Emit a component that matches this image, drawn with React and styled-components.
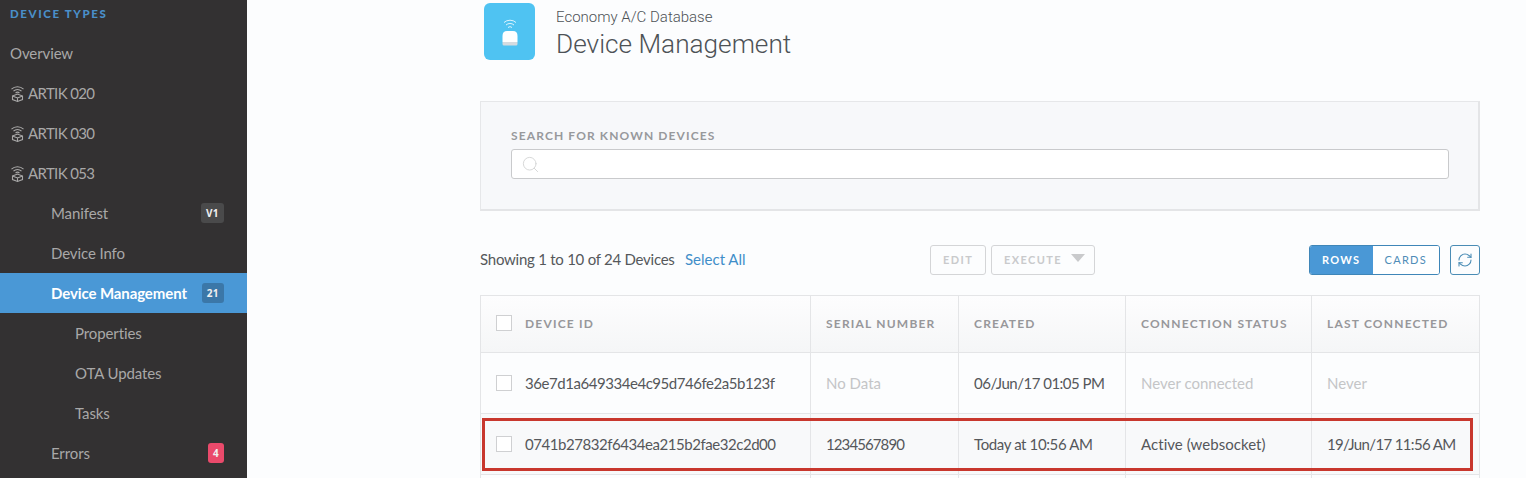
import React from "react";
import styled, { createGlobalStyle } from "styled-components";
import { Search, RefreshCw } from "lucide-react";

const Global = createGlobalStyle`
  html, body { margin: 0; padding: 0; background: #fcfdfe; }
  body { font-family: "Lato", "Noto Sans", sans-serif; }
  * { box-sizing: border-box; }
`;

const Page = styled.div`
  display: flex;
  width: 1526px;
  height: 478px;
  overflow: hidden;
  background: #fcfdfe;
`;

const Sidebar = styled.nav`
  width: 247px;
  flex: none;
  background: #333132;
  padding-top: 5px;
`;

const SideHeading = styled.div`
  height: 28px;
  padding: 0 0 0 10px;
  font-size: 11.5px;
  line-height: 18px;
  font-weight: 900;
  letter-spacing: 1.6px;
  color: #4a8fc9;
`;

const SideItem = styled.div`
  height: 40px;
  display: flex;
  align-items: center;
  gap: 3px;
  padding: 0 23px 0 ${(p) => p.$indent}px;
  font-size: 15px;
  color: ${(p) => (p.$active ? "#ffffff" : "#a9a8a8")};
  font-weight: ${(p) => (p.$active ? 700 : 400)};
  background: ${(p) => (p.$active ? "#4a98d6" : "transparent")};
`;

const SideLabel = styled.span`
  flex: 1;
  white-space: nowrap;
  letter-spacing: ${(p) => p.$track ?? -0.1}px;
`;

const Badge = styled.span`
  height: 20px;
  min-width: 16px;
  padding: 0 5px;
  border-radius: 3px;
  display: flex;
  align-items: center;
  justify-content: center;
  font-family: "Noto Sans", sans-serif;
  font-size: 10px;
  font-weight: 700;
  letter-spacing: 0.4px;
  color: #f0f0f0;
  background: ${(p) => p.$bg};
`;

const Main = styled.main`
  flex: 1;
  min-width: 0;
  padding: 3px 46px 0 233px;
`;

const Header = styled.header`
  display: flex;
  height: 57px;
  padding-left: 4px;
  gap: 21px;
`;

const Tile = styled.div`
  width: 51px;
  height: 57px;
  border-radius: 6px;
  background: #4fc3f2;
  display: flex;
  align-items: center;
  justify-content: center;
`;

const Titles = styled.div`
  display: flex;
  flex-direction: column;
`;

const Kicker = styled.div`
  font-family: "Roboto", sans-serif;
  font-weight: 300;
  font-size: 15px;
  line-height: 20px;
  margin-top: 4px;
  color: #4d5256;
`;

const Title = styled.h1`
  margin: 0;
  font-family: "Roboto", sans-serif;
  font-weight: 300;
  font-size: 26.2px;
  line-height: 35px;
  color: #4d5256;
`;

const SearchPanel = styled.section`
  margin-top: 41px;
  height: 110px;
  padding: 27px 29px 0 30px;
  background: #f7f8fa;
  border: 1px solid #e6e7e9;
  border-right: 2px solid #e4e5e7;
  border-bottom: 2px solid #e4e5e7;
`;

const SearchLabel = styled.div`
  font-size: 12px;
  line-height: 14px;
  font-weight: 700;
  letter-spacing: 1.12px;
  color: #97999c;
`;

const SearchBox = styled.div`
  margin-top: 6px;
  height: 30px;
  background: #fff;
  border: 1px solid #c9cacc;
  border-radius: 3px;
  display: flex;
  align-items: center;
  padding-left: 9px;
  color: #d5d6d6;
`;

const Toolbar = styled.div`
  margin-top: 34px;
  height: 30px;
  display: flex;
  align-items: center;
`;

const Showing = styled.span`
  font-size: 15px;
  color: #55585b;
  letter-spacing: -0.25px;
  width: 205px;
  margin-bottom: 3px;
  white-space: nowrap;
`;

const SelectAll = styled.span`
  font-size: 15px;
  color: #3f8ec9;
  width: 245px;
  margin-bottom: 3px;
  white-space: nowrap;
`;

const GhostButton = styled.button`
  height: 30px;
  width: ${(p) => p.$w}px;
  margin-right: 5px;
  padding: 0 0 1px ${(p) => p.$pad}px;
  display: flex;
  align-items: center;
  background: transparent;
  border: 1px solid #d4d5d7;
  border-radius: 3px;
  font-family: inherit;
  font-size: 11px;
  font-weight: 700;
  letter-spacing: 1.4px;
  color: #c9cacc;
`;

const Caret = styled.i`
  margin-left: 9px;
  margin-top: -3px;
  border-left: 7px solid transparent;
  border-right: 7px solid transparent;
  border-top: 8px solid #c9cacc;
`;

const Toggle = styled.div`
  display: flex;
  margin-left: 209px;
  height: 30px;
  width: 131px;
  border: 1px solid #3f86b8;
  border-radius: 3px;
  overflow: hidden;
`;

const ToggleOption = styled.div`
  display: flex;
  align-items: center;
  justify-content: center;
  width: ${(p) => p.$w}px;
  padding-bottom: 1px;
  font-size: 11px;
  font-weight: ${(p) => (p.$on ? 700 : 400)};
  letter-spacing: 1.3px;
  color: ${(p) => (p.$on ? "#fff" : "#4f8db8")};
  background: ${(p) => (p.$on ? "#4a98d6" : "#fff")};
`;

const RefreshButton = styled.div`
  margin-left: 10px;
  width: 30px;
  height: 30px;
  border: 1px solid #4a8cb5;
  border-radius: 3px;
  display: flex;
  align-items: center;
  justify-content: center;
  color: #4a8cb5;
`;

const Table = styled.div`
  position: relative;
  margin-top: 20px;
  border-top: 1px solid #e4e5e7;
  border-left: 1px solid #e4e5e7;
`;

const Row = styled.div`
  display: grid;
  grid-template-columns: 330px 148px 167px 186px 168px;
  height: ${(p) => p.$h}px;
  border-bottom: 1px solid #e4e5e7;
  background: ${(p) => p.$bg || "transparent"};
`;

const Cell = styled.div`
  display: flex;
  align-items: center;
  gap: 13px;
  padding-left: 15px;
  border-right: 1px solid #e4e5e7;
  font-size: 15px;
  letter-spacing: ${(p) => p.$track ?? 0}px;
  white-space: nowrap;
  color: ${(p) => (p.$muted ? "#c4c5c7" : "#55575a")};
`;

const HeadCell = styled(Cell)`
  padding-bottom: 2px;
  font-size: 12px;
  font-weight: 700;
  letter-spacing: 1.2px;
  color: #97979a;
`;

const Check = styled.span`
  width: 16px;
  height: 16px;
  flex: none;
  background: #fff;
  border: 1px solid #cfd0d2;
`;

const Highlight = styled.div`
  position: absolute;
  left: 1px;
  top: 122px;
  width: 991px;
  height: 53px;
  border: 3px solid #c8372d;
  pointer-events: none;
`;

const DeviceGlyph = () => (
  <svg width="15" height="17" viewBox="0 0 15 17" fill="none" stroke="currentColor" strokeWidth="1.1">
    <path d="M1.5 4.2 A8.5 8.5 0 0 1 13.5 4.2" />
    <path d="M3.5 6.2 A5.6 5.6 0 0 1 11.5 6.2" />
    <path d="M5.6 8 A2.8 2.8 0 0 1 9.4 8" />
    <path d="M2.5 11 L7.5 9 L12.5 11 V14.5 L7.5 16.4 L2.5 14.5 Z" />
    <path d="M2.5 11 L7.5 13 L12.5 11 M7.5 13 V16.4" />
  </svg>
);

const TileGlyph = () => (
  <svg width="18" height="28" viewBox="0 0 18 28" fill="none">
    <g stroke="#ffffff" strokeOpacity="0.8" strokeWidth="1">
      <path d="M3 4.5 A9 9 0 0 1 15 4.5" />
      <path d="M5 7 A6 6 0 0 1 13 7" />
      <path d="M7 9.5 A3 3 0 0 1 11 9.5" />
    </g>
    <path d="M1.5 24 V18 Q1.5 13 6 13 H12 Q16.5 13 16.5 18 V24 Z" fill="#ffffff" />
    <path d="M1.5 24 H16.5 V26 Q16.5 27.5 15 27.5 H3 Q1.5 27.5 1.5 26 Z" fill="#d5dbe0" />
  </svg>
);

const nav = [
  { label: "Overview", indent: 10 },
  { label: "ARTIK 020", indent: 10, icon: true, track: -0.65 },
  { label: "ARTIK 030", indent: 10, icon: true, track: -0.65 },
  { label: "ARTIK 053", indent: 10, icon: true, track: -0.65 },
  { label: "Manifest", indent: 51, badge: "V1", bg: "#4a4a4b" },
  { label: "Device Info", indent: 51 },
  { label: "Device Management", indent: 51, active: true, badge: "21", bg: "#3b77a8" },
  { label: "Properties", indent: 75 },
  { label: "OTA Updates", indent: 75 },
  { label: "Tasks", indent: 75 },
  { label: "Errors", indent: 51, badge: "4", bg: "#ea4a6b" },
  { label: "", indent: 51 },
];

const rows = [
  {
    id: "36e7d1a649334e4c95d746fe2a5b123f",
    cells: [
      { text: "No Data", muted: true },
      { text: "06/Jun/17 01:05 PM", track: -0.5 },
      { text: "Never connected", muted: true },
      { text: "Never", muted: true },
    ],
  },
  {
    id: "0741b27832f6434ea215b2fae32c2d00",
    bg: "#f8f9fa",
    cells: [
      { text: "1234567890", track: -0.9 },
      { text: "Today at 10:56 AM", track: -0.38 },
      { text: "Active (websocket)", track: 0.05 },
      { text: "19/Jun/17 11:56 AM", track: -0.65 },
    ],
  },
];

export default function App() {
  return (
    <>
      <Global />
      <Page>
        <Sidebar>
          <SideHeading>DEVICE TYPES</SideHeading>
          {nav.map((n, i) => (
            <SideItem key={i} $indent={n.indent} $active={n.active}>
              {n.icon && <DeviceGlyph />}
              <SideLabel $track={n.track}>{n.label}</SideLabel>
              {n.badge && <Badge $bg={n.bg}>{n.badge}</Badge>}
            </SideItem>
          ))}
        </Sidebar>
        <Main>
          <Header>
            <Tile>
              <TileGlyph />
            </Tile>
            <Titles>
              <Kicker>Economy A/C Database</Kicker>
              <Title>Device Management</Title>
            </Titles>
          </Header>
          <SearchPanel>
            <SearchLabel>SEARCH FOR KNOWN DEVICES</SearchLabel>
            <SearchBox>
              <Search size={19} strokeWidth={1.2} />
            </SearchBox>
          </SearchPanel>
          <Toolbar>
            <Showing>Showing 1 to 10 of 24 Devices</Showing>
            <SelectAll>Select All</SelectAll>
            <GhostButton $w={56} $pad={12}>EDIT</GhostButton>
            <GhostButton $w={104} $pad={12}>
              EXECUTE
              <Caret />
            </GhostButton>
            <Toggle>
              <ToggleOption $on $w={63}>ROWS</ToggleOption>
              <ToggleOption $w={67}>CARDS</ToggleOption>
            </Toggle>
            <RefreshButton>
              <RefreshCw size={16} strokeWidth={1.6} />
            </RefreshButton>
          </Toolbar>
          <Table>
            <Row $h={57} $bg="linear-gradient(#fdfdfe, #f5f6f7)">
              <HeadCell>
                <Check />
                DEVICE ID
              </HeadCell>
              <HeadCell>SERIAL NUMBER</HeadCell>
              <HeadCell>CREATED</HeadCell>
              <HeadCell>CONNECTION STATUS</HeadCell>
              <HeadCell>LAST CONNECTED</HeadCell>
            </Row>
            {rows.map((r) => (
              <Row key={r.id} $h={61} $bg={r.bg}>
                <Cell $track={-0.45}>
                  <Check />
                  {r.id}
                </Cell>
                {r.cells.map((c) => (
                  <Cell key={c.text} $muted={c.muted} $track={c.track}>
                    {c.text}
                  </Cell>
                ))}
              </Row>
            ))}
            <Row $h={30}>
              <Cell />
              <Cell />
              <Cell />
              <Cell />
              <Cell />
            </Row>
            <Highlight />
          </Table>
        </Main>
      </Page>
    </>
  );
}
